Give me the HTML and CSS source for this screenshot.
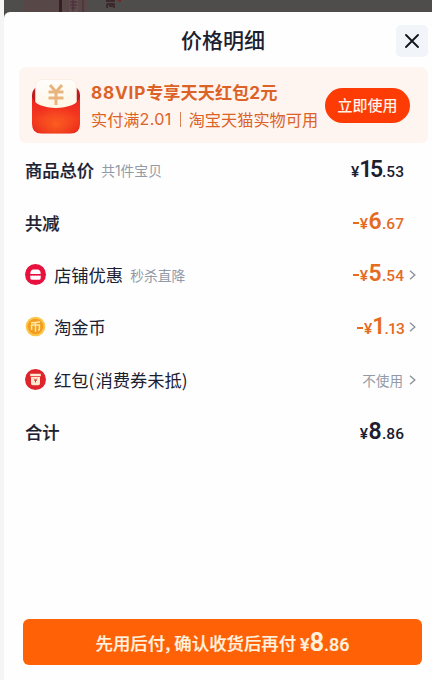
FILE: index.html
```html
<!DOCTYPE html>
<html lang="zh-CN">
<head>
    <meta charset="UTF-8">
    <meta name="viewport" content="width=device-width, initial-scale=1.0">
    <title>价格明细</title>
    <link rel="stylesheet" href="styles.css">
</head>
<body>
    <div class="page">
        <!-- Fondo oscurecido detrás del panel -->
        <svg class="backdrop" width="428" height="24" viewBox="0 0 428 24">
            <rect width="428" height="24" fill="#4e4d4c"/>
            <rect x="19" width="64" height="12" fill="#574746"/>
            <rect x="55" width="3" height="12" fill="#351f24"/>
            <rect x="65" width="9" height="12" fill="#604b50"/>
            <path d="M66 2h7M66 5h7M67 8h5M69 0v11M79 0v12" stroke="#492c36" fill="none"/>
            <path d="M102 1h9M103 4h7v4M103 4v4M105 6h4" stroke="#381e20" stroke-width="1.4" fill="none"/>
            <path d="M114 0l3 1" stroke="#6b2929" stroke-width="2"/>
        </svg>
        <div class="sheet">
            <div class="sheet-header">
                <h1 class="sheet-title">价格明细</h1>
                <button class="close-button">
                    <svg width="14" height="14" viewBox="0 0 14 14">
                        <path d="M1 1l12 12M13 1L1 13" stroke="#11141d" stroke-width="1.8" stroke-linecap="round"/>
                    </svg>
                </button>
            </div>

            <div class="banner">
                <svg class="banner-icon" width="48" height="55" viewBox="0 0 48 55">
                    <defs>
                        <linearGradient id="pocket" x1="0" y1="0" x2="0" y2="1">
                            <stop offset="0" stop-color="#ed2421"/>
                            <stop offset=".6" stop-color="#f43a1f"/>
                            <stop offset="1" stop-color="#e8261b"/>
                        </linearGradient>
                        <radialGradient id="glow" cx=".5" cy=".75" r=".5">
                            <stop offset="0" stop-color="#ff6a22" stop-opacity=".75"/>
                            <stop offset="1" stop-color="#ff6a22" stop-opacity="0"/>
                        </radialGradient>
                        <linearGradient id="paper" x1="0" y1="0" x2="0" y2="1">
                            <stop offset="0" stop-color="#fffefc"/>
                            <stop offset="1" stop-color="#fff3dc"/>
                        </linearGradient>
                    </defs>
                    <path d="M0 16q0-6 6-8h36q6 2 6 8v10H0z" fill="#be1d20"/>
                    <rect x="3.500" y=".5" width="41" height="40" rx="7" fill="url(#paper)" stroke="#f8e4d2" stroke-width=".6"/>
                    <path d="M18 6l6 7 6-7M16.500 13h15M16.500 19h15M24 13v13" fill="none" stroke="#e9b57e" stroke-width="3"/>
                    <path d="M0 18c3 14.500 45 14.500 48 0v27q0 9.500-9.500 9.500h-29Q0 54.500 0 45z" fill="url(#pocket)"/>
                    <path d="M0 18c3 14.500 45 14.500 48 0v27q0 9.500-9.500 9.500h-29Q0 54.500 0 45z" fill="url(#glow)"/>
                </svg>
                <div class="banner-text">
                    <div class="banner-title"><span class="latin vip">88VIP</span>专享天天红包<span class="latin">2</span>元</div>
                    <div class="banner-desc">实付满<span class="latin">2.01</span><i class="divider"></i>淘宝天猫实物可用</div>
                </div>
                <button class="use-button">立即使用</button>
            </div>

            <div class="rows">
                <div class="row">
                    <span class="label strong">商品总价</span>
                    <span class="note">共<span class="latin">1</span>件宝贝</span>
                    <span class="price"><small>¥</small><b class="tight">15</b><small>.53</small></span>
                </div>
                <div class="row">
                    <span class="label strong">共减</span>
                    <span class="price discount"><i class="minus"></i><small>¥</small><b>6</b><small>.67</small></span>
                </div>
                <div class="row">
                    <svg class="row-icon" width="21" height="21" viewBox="0 0 21 21">
                        <circle cx="10.500" cy="10.500" r="10.500" fill="#e8103f"/>
                        <path d="M5.300 10q0-4.500 3.200-4.500h4q3.200 0 3.200 4.500z" fill="#fff"/>
                        <path d="M5.300 11.300q1.300 1 2.600 0 1.300 1 2.600 0 1.300 1 2.600 0 1.300 1 2.600 0v3q0 1.400-1.400 1.400H6.700q-1.400 0-1.400-1.400z" fill="#fff"/>
                    </svg>
                    <span class="label">店铺优惠</span>
                    <span class="note">秒杀直降</span>
                    <span class="price discount"><i class="minus"></i><small>¥</small><b>5</b><small>.54</small></span>
                    <svg class="arrow" width="7" height="10" viewBox="0 0 7 10"><path d="M1 .8L5.800 5 1 9.200"/></svg>
                </div>
                <div class="row">
                    <svg class="row-icon" width="21" height="21" viewBox="0 0 21 21">
                        <circle cx="10.500" cy="10.500" r="9.800" fill="#fbc64e"/>
                        <circle cx="10.500" cy="10.500" r="7.800" fill="#f29d1d"/>
                        <path d="M6 6.700q5 0 9-.9M6.600 14V9h7.800v4.200q0 1-1.400.8M10.500 6.300v9.500" fill="none" stroke="#ffe7a3" stroke-width="1.500"/>
                    </svg>
                    <span class="label">淘金币</span>
                    <span class="price discount"><i class="minus"></i><small>¥</small><b class="tight">1</b><small class="tight-small">.13</small></span>
                    <svg class="arrow" width="7" height="10" viewBox="0 0 7 10"><path d="M1 .8L5.800 5 1 9.200"/></svg>
                </div>
                <div class="row">
                    <svg class="row-icon" width="21" height="21" viewBox="0 0 21 21">
                        <circle cx="10.500" cy="10.500" r="10.500" fill="#df242c"/>
                        <path d="M5.200 4.700h10.600v2.500H5.200zM6 8h9v6.500q0 1.700-1.700 1.700H7.700Q6 16.200 6 14.500z" fill="#ffe9cf"/>
                        <path d="M9 9.500l1.500 1.500L12 9.500M9 11.300h3M10.500 11v2.500" stroke="#d9463c" fill="none"/>
                    </svg>
                    <span class="label">红包<span class="paren">(</span>消费券未抵<span class="paren">)</span></span>
                    <span class="unused">不使用</span>
                    <svg class="arrow" width="7" height="10" viewBox="0 0 7 10"><path d="M1 .8L5.800 5 1 9.200"/></svg>
                </div>
                <div class="row">
                    <span class="label strong">合计</span>
                    <span class="price"><small>¥</small><b>8</b><small>.86</small></span>
                </div>
            </div>

            <button class="pay-button">
                <span>先用后付<span class="comma">,</span>确认收货后再付</span>
                <span class="pay-price"><small>¥</small><b>8</b><small>.86</small></span>
            </button>
        </div>
    </div>
</body>
</html>
```
FILE: styles.css
```css
* {
    box-sizing: border-box;
}
body {
    margin: 0;
    background-color: #f5f5f6;
    font-family: "Noto Sans CJK SC", sans-serif;
    color: #1b2030;
}
button {
    border: none;
    padding: 0;
    font-family: inherit;
}
.page {
    height: 680px;
    padding-left: 4px;
    overflow: hidden;
}
.backdrop {
    display: block;
}
.sheet {
    position: relative;
    display: flex;
    flex-direction: column;
    height: 668px;
    margin-top: -12px;
    background-color: #fefefe;
    border-radius: 6px 0 0 0;
}
.sheet-header {
    display: grid;
    grid-template-columns: 46px 1fr 32px;
    align-items: center;
    height: 55px;
    padding: 2px 4px 0 0;
}
.sheet-title {
    grid-column: 2;
    margin: 0;
    padding-bottom: 4px;
    text-align: center;
    font-size: 21px;
    line-height: 30px;
    font-weight: 500;
}
.close-button {
    display: flex;
    align-items: center;
    justify-content: center;
    width: 32px;
    height: 32px;
    border-radius: 5px;
    background-color: #f1f4f8;
}
.banner {
    display: flex;
    align-items: center;
    height: 76px;
    margin: 0 4px 0 15px;
    padding: 0 18px 0 13px;
    border-radius: 7px;
    background-color: #fef5f0;
}
.banner-icon {
    flex: none;
    margin-top: 2px;
}
.banner-text {
    flex: 1;
    margin-left: 11px;
    white-space: nowrap;
    color: #dc6327;
}
.latin {
    font-family: Inter, sans-serif;
}
.banner-title {
    font-size: 17.2px;
    line-height: 27px;
    font-weight: 700;
}
.vip {
    letter-spacing: .8px;
}
.banner-desc {
    display: flex;
    align-items: center;
    font-size: 16.2px;
    line-height: 27px;
}
.banner-desc .latin {
    letter-spacing: .3px;
}
.divider {
    width: 1px;
    height: 15px;
    margin: 0 8px;
    background-color: #dc8158;
}
.use-button {
    flex: none;
    width: 85px;
    height: 35px;
    padding-bottom: 2px;
    border-radius: 18px;
    background-color: #fd3b04;
    color: #fff3e6;
    font-size: 15px;
    font-weight: 500;
}
.rows {
    flex: 1;
    padding: 1.5px 16px 0 21px;
}
.row {
    display: flex;
    align-items: center;
    height: 52.4px;
}
.row-icon {
    margin: -2px 8px 0 0;
}
.label {
    padding-bottom: 2px;
    font-size: 17.3px;
}
.strong {
    font-weight: 500;
    -webkit-text-stroke: .2px;
}
.paren {
    margin-right: 1px;
}
.note {
    margin-left: 7px;
    padding-bottom: 1px;
    font-size: 13.8px;
    color: #929aa8;
}
.price {
    margin-left: auto;
    margin-right: 12px;
    font-family: Roboto, sans-serif;
    line-height: 26px;
    white-space: nowrap;
}
.price b, .pay-price b {
    font-size: 23px;
    font-weight: 600;
}
.price small, .pay-price small {
    font-size: 15.5px;
    font-weight: 500;
}
.price b {
    margin: 0 .5px;
}
.price .tight {
    margin: 0;
    letter-spacing: -2.5px;
}
.price .tight + small {
    margin-left: 1.5px;
}
.price .tight-small {
    letter-spacing: -.8px;
}
.minus {
    display: inline-block;
    width: 6px;
    height: 2px;
    margin-right: 1px;
    background-color: currentColor;
    vertical-align: 5px;
}
.discount {
    color: #e56b1f;
}
.unused {
    margin-left: auto;
    margin-right: 13px;
    padding-bottom: 1px;
    font-size: 13.6px;
    color: #929aa8;
}
.price + .arrow, .unused + .arrow {
    margin-left: -7px;
    margin-right: 0;
}
.arrow {
    margin-top: -1px;
    fill: none;
    stroke: #8e929a;
    stroke-width: 1.4;
}
.pay-button {
    display: flex;
    align-items: center;
    justify-content: center;
    height: 46px;
    margin: 0 10px 15px 19px;
    border-radius: 6px;
    background-color: #ff6206;
    color: #fff3e0;
    font-size: 17.4px;
    font-weight: 500;
    -webkit-text-stroke: .2px;
}
.comma {
    margin-right: 4px;
}
.pay-price {
    margin-left: 4px;
    font-family: Roboto, sans-serif;
}
.pay-price b {
    font-size: 25px;
}
.pay-price small {
    font-size: 18px;
}
```
